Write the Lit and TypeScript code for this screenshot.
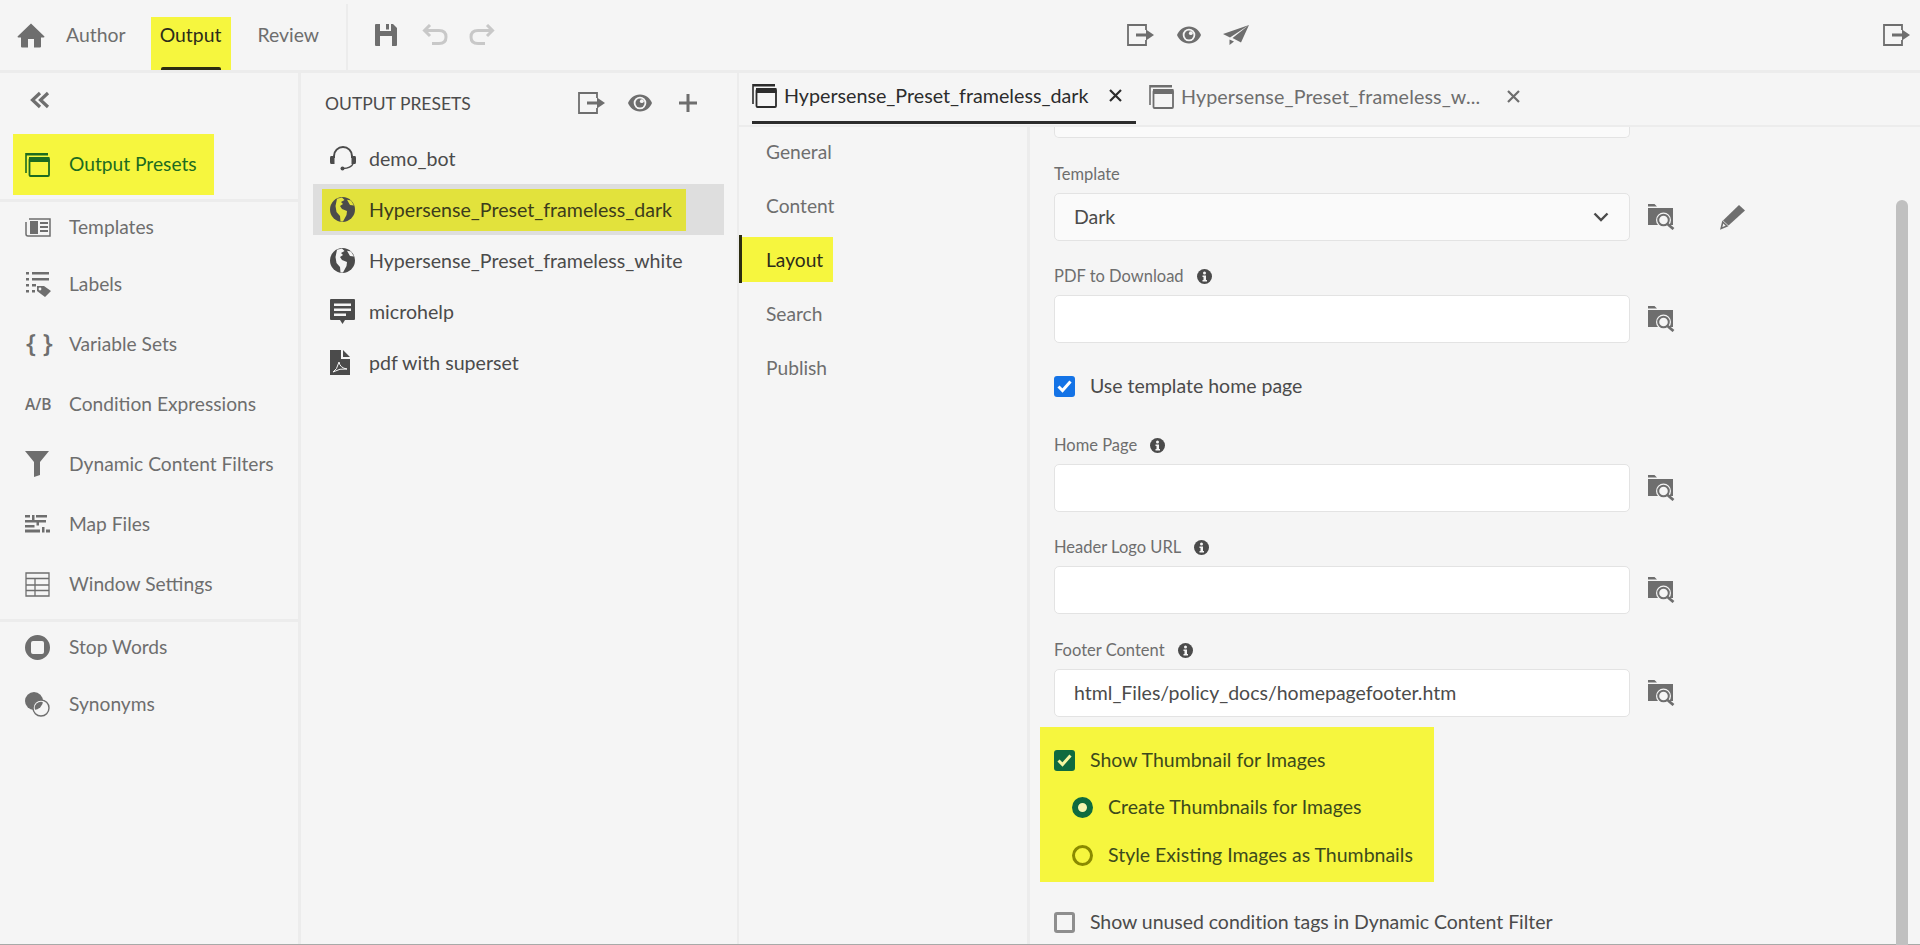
import { LitElement, html, css } from "lit";
import { customElement } from "lit/decorators.js";

const I = {
  home: html`<svg width="28" height="25" viewBox="0 0 28 25"><path fill="#6e6e6e" d="M14 0.5 L0.5 13.5 Q0.5 14.5 1.5 14.5 H4 V23.5 Q4 24.5 5 24.5 H11 V16 H17 V24.5 H23 Q24 24.5 24 23.5 V14.5 H26.5 Q27.5 14.5 27.5 13.5Z"/></svg>`,
  save: html`<svg width="22" height="22" viewBox="0 0 22 22"><path fill="#6e6e6e" fill-rule="evenodd" d="M1 0H5V7H16V0H18L22 4V21Q22 22 21 22H1Q0 22 0 21V1Q0 0 1 0ZM5 12V22H17V12ZM11 0H14V5.5H11Z"/></svg>`,
  undo: html`<svg width="26" height="22" viewBox="0 0 26 22"><path fill="none" stroke="#c8c8c8" stroke-width="3" d="M2.5 6.5H17Q24 6.5 24 13T17 19.5H10M8 1L2.5 6.5 8 12"/></svg>`,
  redo: html`<svg width="26" height="22" viewBox="0 0 26 22"><path fill="none" stroke="#c8c8c8" stroke-width="3" d="M23.5 6.5H9Q2 6.5 2 13T9 19.5H16M18 1L23.5 6.5 18 12"/></svg>`,
  exp: html`<svg width="28" height="22" viewBox="0 0 28 22"><path fill="none" stroke="#6e6e6e" stroke-width="1.8" d="M19 6V1H1V21H19V16"/><path fill="#6e6e6e" d="M9 9.5H19V5.5L27 11 19 16.5V12.5H9Z"/></svg>`,
  eye: html`<svg width="24" height="18" viewBox="0 0 24 18"><path fill="#6e6e6e" fill-rule="evenodd" d="M12 0.500C6 0.500 2 4.500 0 9C2 13.500 6 17.500 12 17.500S22 13.500 24 9C22 4.500 18 0.500 12 0.500ZM12 2.700A6.300 6.300 0 1 1 12 15.300A6.300 6.300 0 1 1 12 2.700Z"/><circle cx="12" cy="9" r="4.500" fill="#6e6e6e"/><circle cx="13.800" cy="7.200" r="1.900" fill="#f5f5f5"/></svg>`,
  send: html`<svg width="26" height="20" viewBox="0 0 26 20"><path fill="#6e6e6e" d="M26 0L0 9 7 12.500ZM26 0L9.500 13 18 17.500ZM6.500 14.500L11 16.500 6.500 20Z"/></svg>`,
  plus: html`<svg width="20" height="20" viewBox="0 0 20 20"><path fill="#6e6e6e" d="M8.5 1H11.5V8.5H19V11.5H11.5V19H8.5V11.5H1V8.5H8.5Z"/></svg>`,
  collapse: html`<svg width="20" height="18" viewBox="0 0 20 18"><path fill="none" stroke="#6e6e6e" stroke-width="3.2" d="M10 2L2.5 9 10 16M18 2L10.5 9 18 16"/></svg>`,
  templates: html`<svg width="26" height="19" viewBox="0 0 26 19"><g fill="none" stroke="#6e6e6e"><path stroke-width="1.5" d="M4 1H25V18H3Q1 18 1 16V4"/></g><path fill="#6e6e6e" d="M5 3H13V16H5ZM15 4H23V6H15ZM15 8H23V10H15ZM15 12H23V14H15Z"/></svg>`,
  labels: html`<svg width="26" height="26" viewBox="0 0 26 26"><path fill="#6e6e6e" d="M1 1H4V3.5H1ZM7 1H24V3.5H7ZM1 7H4V9.5H1ZM7 7H24V9.5H7ZM1 13H4V15.5H1ZM7 13H11V15.5H7ZM1 19H4V21.5H1ZM7 19H10V21.5H7ZM12 15H19L26 20 20 26 12 20Z"/><circle cx="15" cy="18" r="1.4" fill="#f5f5f5"/></svg>`,
  filter: html`<svg width="24" height="26" viewBox="0 0 24 26"><path fill="#6e6e6e" d="M0 0H24L15 11V24L9 26V11Z"/></svg>`,
  map: html`<svg width="25" height="18" viewBox="0 0 25 18"><path fill="#6e6e6e" d="M0 0H5V2.500H0ZM7 0H9.500V5H21V7.500H14V10.500H11.500V7.500H0V5H7ZM0 10H9.500V12.500H0ZM0 14.500H15V17.500H0ZM17 12H19.500V17.500H17ZM21 14.500H25V17.500H21ZM11 0H22V2.500H11Z"/></svg>`,
  table: html`<svg width="25" height="25" viewBox="0 0 25 25"><path fill="none" stroke="#6e6e6e" stroke-width="1.3" d="M1 1H24V24H1ZM1 6.5H24M1 13H24M1 18.5H24M10 6.5V24"/></svg>`,
  stop: html`<svg width="25" height="25" viewBox="0 0 25 25"><path fill="#6e6e6e" fill-rule="evenodd" d="M12.5 0A12.5 12.5 0 1 0 12.5 25A12.5 12.5 0 1 0 12.5 0ZM8 6H17Q19 6 19 8V17Q19 19 17 19H8Q6 19 6 17V8Q6 6 8 6Z"/></svg>`,
  syn: html`<svg width="25" height="25" viewBox="0 0 25 25"><defs><clipPath id="syn-c"><circle cx="16" cy="16" r="6.300"/></clipPath></defs><circle cx="9" cy="9" r="9" fill="#6e6e6e"/><circle cx="16" cy="16" r="8" fill="#f5f5f5" stroke="#6e6e6e" stroke-width="1.400"/><circle cx="9" cy="9" r="9" fill="#6e6e6e" clip-path="url(#syn-c)"/></svg>`,
  headset: html`<svg width="26" height="25" viewBox="0 0 26 25"><path fill="none" stroke="#4b4b4b" stroke-width="2" d="M4 12V10A9 9 0 0 1 22 10V12"/><path fill="#4b4b4b" d="M1 10H4.5V18H1Q0 18 0 16V12Q0 10 1 10ZM21.5 10H25Q26 10 26 12V16Q26 18 25 18H21.5Z"/><path fill="none" stroke="#4b4b4b" stroke-width="1.4" d="M23 18Q21 22 13 22.5"/><circle cx="12.5" cy="22.5" r="2" fill="#4b4b4b"/></svg>`,
  globe: (bg: string) => html`<svg width="25" height="25" viewBox="0 0 25 25"><circle cx="12.5" cy="12.5" r="12.5" fill="#4b4b4b"/><path fill="${bg}" d="M7 1.800L12 0.500 14.500 3 11 5 13 7 10 9 12 12 17 14 16.500 18 13 24.500 10.500 24.500 10 19 6.500 15 5.500 9ZM17 2.800L21 3.500 24 8.500 20 8Z"/></svg>`,
  comment: html`<svg width="25" height="26" viewBox="0 0 25 26"><path fill="#4b4b4b" d="M1 0H24Q25 0 25 1V20Q25 21 24 21H15L12.5 25 10 21H1Q0 21 0 20V1Q0 0 1 0Z"/><path fill="#f5f5f5" d="M4 4.5H21V7H4ZM4 9.5H21V12H4ZM4 14.5H16V17H4Z"/></svg>`,
  pdf: html`<svg width="20" height="25" viewBox="0 0 20 25"><path fill="#4b4b4b" d="M0 0H11V9H20V25H0ZM13 0L20 7H13Z"/><path fill="none" stroke="#f5f5f5" stroke-width="1" d="M3 22Q7 20 9 12Q10 18 17 19Q10 18 3 22Z"/></svg>`,
  win: (c: string, w = 25) => html`<svg width="${w}" height="25" viewBox="0 0 25 25"><path fill="none" stroke="${c}" stroke-width="1.6" d="M1 2H22M1 1V21"/><rect x="1" y="1" width="22" height="2.5" fill="${c}"/><rect x="4.5" y="6.5" width="19.5" height="17.5" rx="1" fill="none" stroke="${c}" stroke-width="1.8"/><rect x="4" y="5" width="20.5" height="5" fill="${c}"/></svg>`,
  close: (c: string) => html`<svg width="13" height="13" viewBox="0 0 13 13"><path fill="none" stroke="${c}" stroke-width="2.2" d="M1 1L12 12M12 1L1 12"/></svg>`,
  chev: html`<svg width="16" height="10" viewBox="0 0 16 10"><path fill="none" stroke="#4b4b4b" stroke-width="2.4" d="M1.5 1.5L8 8 14.500 1.500"/></svg>`,
  folder: html`<svg width="27" height="26" viewBox="0 0 27 26"><path fill="#6e6e6e" d="M0 0H6.500L9 2.500H0ZM0 4H25V21H0Z"/><circle cx="15.500" cy="16" r="7.500" fill="#f5f5f5"/><circle cx="15.500" cy="16" r="5.300" fill="#f5f5f5" stroke="#6e6e6e" stroke-width="2"/><path fill="none" stroke="#6e6e6e" stroke-width="2.800" d="M19.500 20L25.500 25"/></svg>`,
  pencil: html`<svg width="25" height="25" viewBox="0 0 25 25"><path fill="#6e6e6e" d="M19 0L25 5.500 8.500 20.500 3 15.500Z"/><path fill="none" stroke="#6e6e6e" stroke-width="1.600" d="M2.800 17L7 21 1.200 23.500Z"/></svg>`,
  info: html`<svg width="15" height="15" viewBox="0 0 15 15"><circle cx="7.500" cy="7.500" r="7.500" fill="#4b4b4b"/><circle cx="7.500" cy="4" r="1.500" fill="#f5f5f5"/><path fill="#f5f5f5" d="M5.500 6.500H9V11H10V12.500H5.500V11H6.500V8H5.500Z"/></svg>`,
  check: (c: string) => html`<svg width="15" height="13" viewBox="0 0 15 13"><path fill="none" stroke="${c}" stroke-width="3" d="M1.500 6.500L5.500 10.500 13.500 1.500"/></svg>`,
};

@customElement("app-root")
export class AppRoot extends LitElement {
  static styles = css`
    :host { display: flex; flex-direction: column; width: 1920px; height: 945px; overflow: hidden; position: relative;
      background: #f5f5f5; font-family: "Lato", "Liberation Sans", sans-serif; font-size: 19.200px; color: #6e6e6e; }
    svg { display: block; flex: none; }
    .top { flex: none; height: 70px; border-bottom: 3px solid #ececec; display: flex; align-items: center; padding-left: 17px; position: relative; box-sizing: content-box; }
    .top .t { font-size: 19.400px; position: relative; top: -1px; }
    .author { margin-left: 21px; }
    .top .output { top: 0; margin-left: 25px; width: 80px; height: 53px; align-self: flex-end; background: #f6f63e; color: #2c2c1a; display: flex; justify-content: center; align-items: center; padding-bottom: 18px; box-sizing: border-box; }
    .output::after { content: ""; position: absolute; left: 10px; right: 10px; bottom: 0; height: 3px; background: #2c2c10; border-radius: 2px 2px 0 0; }
    .review { margin-left: 27px; }
    .vdiv { width: 2px; height: 66px; align-self: flex-end; background: #ececec; margin-left: 27px; }
    .save { margin-left: 27px; }
    .undo { margin-left: 25px; }
    .redo { margin-left: 21px; }
    .center { margin-left: 632px; display: flex; align-items: center; gap: 22px; }
    .far { margin-left: auto; margin-right: 9px; }

    .main { flex: 1; display: flex; min-height: 0; border-bottom: 1px solid #a8aaa8; }
    .side { flex: none; width: 298px; border-right: 3px solid #ececec; display: flex; flex-direction: column; }
    .coll { height: 61px; padding: 18px 0 0 30px; box-sizing: border-box; }
    .sel-side { height: 61px; width: 201px; margin-left: 13px; background: #f6f63e; color: #1c6b20; display: flex; align-items: center; gap: 19px; padding-left: 12px; box-sizing: border-box; }
    .sel-side span { position: relative; top: -1px; }
    .rule { height: 3px; background: #ececec; flex: none; }
    .r1 { margin-top: 4px; }
    .grp { display: flex; flex-direction: column; gap: 20px; padding-top: 5px; }
    .grp2 { gap: 17px; }
    .it { height: 40px; display: flex; align-items: center; padding-left: 25px; }
    .it .ic { width: 44px; flex: none; display: flex; align-items: center; }
    .it .tx { position: relative; top: -1px; }
    .it.first { margin-bottom: -3px; }
    .ab { font-size: 15.500px; font-weight: 600; font-family: "Open Sans", sans-serif; color: #6e6e6e; }
    .br { font-size: 26px; font-weight: 600; font-family: "Open Sans", sans-serif; margin-left: 1px; position: relative; top: -2px; }
    .last { margin-bottom: 15px; }

    .list { flex: none; width: 436px; border-right: 2px solid #ececec; }
    .lh { height: 60px; display: flex; align-items: center; padding: 0 39px 0 24px; color: #4b4b4b; font-size: 17.500px; }
    .lh .act { margin-left: auto; display: flex; align-items: center; gap: 22px; }
    .lh .pl { margin-left: 4px; }
    .row { height: 51px; margin: 0 13px 0 12px; display: flex; align-items: center; color: #4b4b4b; font-size: 19.600px; }
    .row.sel { background: #dedede; }
    .row .in { margin-left: 9px; width: 364px; height: 42px; box-sizing: border-box; padding-left: 8px; display: flex; align-items: center; white-space: nowrap; }
    .row.sel .in { background: #e2e23c; color: #3c3c1c; }
    .row .ic { width: 39px; flex: none; }

    .right { flex: 1; display: flex; flex-direction: column; min-width: 0; position: relative; }
    .tabs { flex: none; height: 52px; border-bottom: 2px solid #ececec; display: flex; padding-left: 13px; font-size: 19.700px; }
    .tab { height: 52px; display: flex; align-items: center; box-sizing: border-box; padding-bottom: 5px; white-space: nowrap; }
    .tab.on { width: 384px; border-bottom: 3px solid #2c2c2c; color: #2c2c2c; height: 51px; padding-bottom: 3px; }
    .tab.on .x { margin-left: auto; margin-right: 14px; }
    .tab .name { margin-left: 7px; }
    .tab.off { margin-left: 13px; color: #6e6e6e; }
    .tab.off .name { letter-spacing: 0.120px; }
    .tab.off .x { margin-left: 27px; }

    .body { flex: 1; display: flex; min-height: 0; position: relative; }
    .nav { flex: none; width: 288px; border-right: 3px solid #ececec; display: flex; flex-direction: column; gap: 6px; }
    .nv { height: 48px; display: flex; align-items: center; padding-left: 27px; box-sizing: border-box; }
    .nv.on { border-left: 3px solid #2c2c10; padding: 0; color: #2c2c1a; }
    .nv.on span { background: #f6f63e; width: 91px; height: 45px; padding-left: 24px; box-sizing: border-box; display: flex; align-items: center; }

    .form { flex: 1; padding-left: 24px; display: flex; flex-direction: column; min-width: 0; }
    .stub { width: 576px; height: 11px; flex: none; background: #fafafa; border: 1px solid #e3e3e3; border-top: 0; border-radius: 0 0 5px 5px; box-sizing: border-box; }
    .field { flex: none; margin-top: 26px; }
    .f-tpl { margin-top: 27px; }
    .f-home { margin-top: 30px; }
    .f-foot { margin-top: 27px; }
    .lbl { height: 28px; font-size: 16.500px; display: flex; align-items: flex-start; gap: 13px; line-height: 18px; }
    .lbl svg { margin-top: 2px; }
    .line { display: flex; align-items: center; }
    .box { width: 576px; height: 48px; background: #fff; border: 1px solid #e3e3e3; border-radius: 5px; box-sizing: border-box; display: flex; align-items: center; padding: 0 20px 2px 19px; color: #4b4b4b; font-size: 19.500px; }
    .box.selb { background: #fafafa; justify-content: space-between; padding-bottom: 1px; }
    .line .f { margin-left: 18px; }
    .line .p { margin-left: 45px; }
    .ck { height: 40px; display: flex; align-items: center; gap: 15px; color: #4b4b4b; flex: none; font-size: 19.500px; }
    .ck .tx { position: relative; top: -1px; }
    .c1 { margin-top: 23px; }
    .cb { width: 21px; height: 21px; border-radius: 3px; box-sizing: border-box; display: flex; align-items: center; justify-content: center; flex: none; }
    .cb.blue { background: #1473e6; }
    .cb.green { background: #0f6b3f; }
    .cb.empty { border: 3px solid #8e8e8e; }
    .hl { flex: none; margin: 10px 0 0 -14px; width: 394px; height: 155px; background: #f6f63e; padding: 13px 0 0 14px; box-sizing: border-box; display: flex; flex-direction: column; color: #2f4a20; }
    .hl .ck { color: #3c4a1c; }
    .rd { margin: 7px 0 8px 18px; }
    .rd + .rd { margin: 0 0 0 18px; }
    .rb { width: 21px; height: 21px; border-radius: 50%; box-sizing: border-box; flex: none; }
    .rb.a { border: 6.500px solid #0f6b3f; background: #f6f6b0; }
    .rb.b { border: 3px solid #8a8a00; }
    .un { margin-top: 20px; }
    .un .tx { letter-spacing: -0.050px; }
    .sb { position: absolute; left: 1157px; top: 73px; bottom: -2px; width: 12px; border-radius: 6px 6px 0 0; background: #c0c0c0; }
  `;

  render() {
    const side = (ic: unknown, t: string, cls = "") => html`<div class="it ${cls}"><span class="ic">${ic}</span><span class="tx">${t}</span></div>`;
    const row = (ic: unknown, t: string, cls = "") => html`<div class="row ${cls}"><div class="in"><span class="ic">${ic}</span>${t}</div></div>`;
    const field = (label: string, info: boolean, val: string, cls = "") => html`
      <div class="field ${cls}">
        <div class="lbl">${label}${info ? I.info : ""}</div>
        <div class="line"><div class="box">${val}</div><span class="f">${I.folder}</span></div>
      </div>`;
    return html`
      <header class="top">
        ${I.home}
        <span class="t author">Author</span>
        <span class="t output">Output</span>
        <span class="t review">Review</span>
        <span class="vdiv"></span>
        <span class="save">${I.save}</span>
        <span class="undo">${I.undo}</span>
        <span class="redo">${I.redo}</span>
        <span class="center">${I.exp}${I.eye}${I.send}</span>
        <span class="far">${I.exp}</span>
      </header>
      <div class="main">
        <aside class="side">
          <div class="coll">${I.collapse}</div>
          <div class="sel-side">${I.win("#1c6b20")}<span>Output Presets</span></div>
          <div class="rule r1"></div>
          <div class="grp">
            ${side(I.templates, "Templates", "first")}
            ${side(I.labels, "Labels")}
            ${side(html`<span class="br">{ }</span>`, "Variable Sets")}
            ${side(html`<span class="ab">A/B</span>`, "Condition Expressions")}
            ${side(I.filter, "Dynamic Content Filters")}
            ${side(I.map, "Map Files")}
            ${side(I.table, "Window Settings", "last")}
          </div>
          <div class="rule"></div>
          <div class="grp grp2">
            ${side(I.stop, "Stop Words")}
            ${side(I.syn, "Synonyms")}
          </div>
        </aside>
        <section class="list">
          <div class="lh">OUTPUT PRESETS<span class="act">${I.exp}${I.eye}<span class="pl">${I.plus}</span></span></div>
          ${row(I.headset, "demo_bot")}
          ${row(I.globe("#e2e23c"), "Hypersense_Preset_frameless_dark", "sel")}
          ${row(I.globe("#f5f5f5"), "Hypersense_Preset_frameless_white")}
          ${row(I.comment, "microhelp")}
          ${row(I.pdf, "pdf with superset")}
        </section>
        <section class="right">
          <div class="tabs">
            <div class="tab on">${I.win("#2c2c2c")}<span class="name">Hypersense_Preset_frameless_dark</span><span class="x">${I.close("#2c2c2c")}</span></div>
            <div class="tab off">${I.win("#6e6e6e")}<span class="name">Hypersense_Preset_frameless_w...</span><span class="x">${I.close("#6e6e6e")}</span></div>
          </div>
          <div class="body">
            <nav class="nav">
              <div class="nv">General</div>
              <div class="nv">Content</div>
              <div class="nv on"><span>Layout</span></div>
              <div class="nv">Search</div>
              <div class="nv">Publish</div>
            </nav>
            <div class="form">
              <div class="stub"></div>
              <div class="field f-tpl">
                <div class="lbl">Template</div>
                <div class="line"><div class="box selb">Dark${I.chev}</div><span class="f">${I.folder}</span><span class="p">${I.pencil}</span></div>
              </div>
              ${field("PDF to Download", true, "")}
              <div class="ck c1"><span class="cb blue">${I.check("#fff")}</span><span class="tx">Use template home page</span></div>
              ${field("Home Page", true, "", "f-home")}
              ${field("Header Logo URL", true, "")}
              ${field("Footer Content", true, "html_Files/policy_docs/homepagefooter.htm", "f-foot")}
              <div class="hl">
                <div class="ck"><span class="cb green">${I.check("#f6f6a0")}</span><span class="tx">Show Thumbnail for Images</span></div>
                <div class="ck rd"><span class="rb a"></span><span class="tx">Create Thumbnails for Images</span></div>
                <div class="ck rd"><span class="rb b"></span><span class="tx">Style Existing Images as Thumbnails</span></div>
              </div>
              <div class="ck un"><span class="cb empty"></span><span class="tx">Show unused condition tags in Dynamic Content Filter</span></div>
            </div>
            <div class="sb"></div>
          </div>
        </section>
      </div>
    `;
  }
}
